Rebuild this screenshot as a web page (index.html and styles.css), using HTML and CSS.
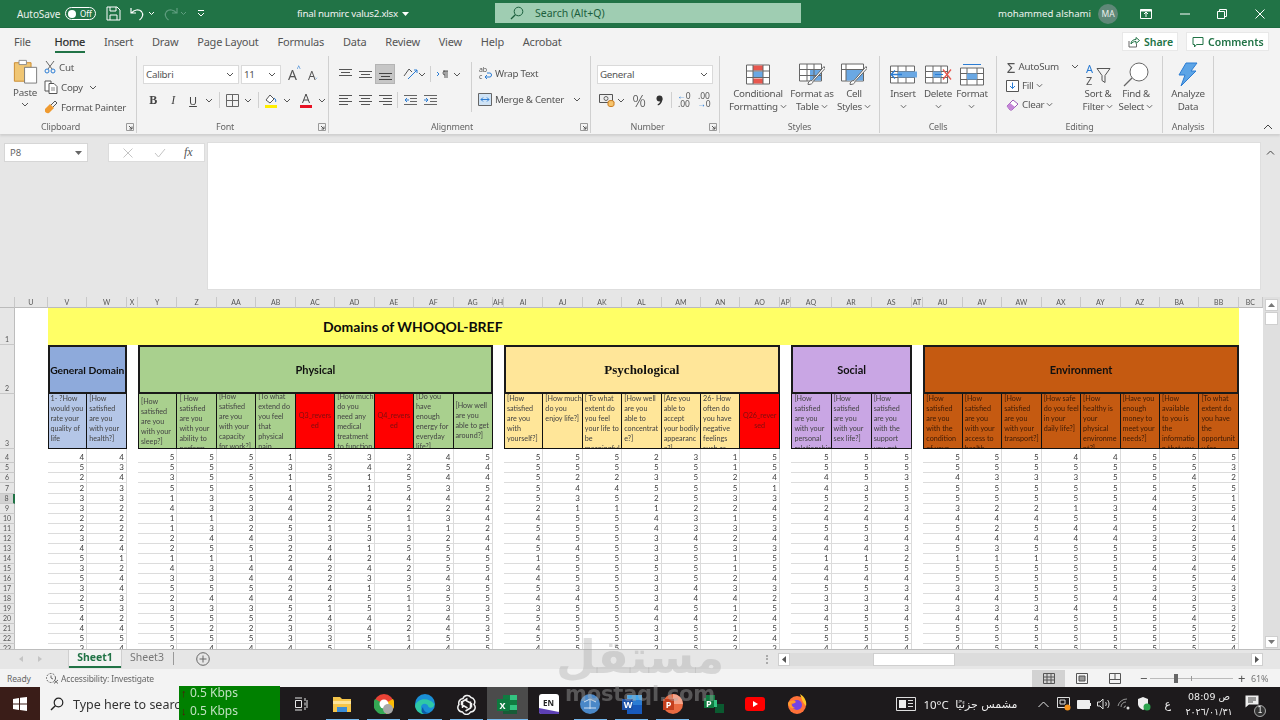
FILE: index.html
```html
<!DOCTYPE html>
<html lang="en">
<head>
<meta charset="utf-8">
<title>final numirc valus2.xlsx - Excel</title>
<link rel="stylesheet" href="styles.css">
</head>
<body>
<svg class="defs" width="0" height="0" aria-hidden="true">
  <symbol id="chev" viewBox="0 0 8 5"><path d="M1 1l3 3 3-3" fill="none" stroke="#555" stroke-width="1"/></symbol>
  <symbol id="launch" viewBox="0 0 8 8"><path d="M.5.5h7v7h-7z" fill="none" stroke="#999"/><path d="M3 3l3 3M6 3.5V6H3.5" fill="none" stroke="#555"/></symbol>
</svg>
<div class="app">
  <header class="titlebar">
    <div class="qat">
      <span class="autosave">AutoSave</span>
      <span class="toggle"><i class="knob"></i><b>Off</b></span>
      <svg class="save" width="15" height="15" viewBox="0 0 15 15"><path d="M1 1h10l3 3v10H1zM4 1v4h6V1M4 14V9h7v5" fill="none" stroke="#fff"/></svg>
      <svg class="undo" width="14" height="14" viewBox="0 0 14 14"><path d="M1 1v5h5M1.500 6C4 2.500 9 2 11.500 4.500c2 2.500 1.500 6-2 8.500" fill="none" stroke="#fff" stroke-width="1.200"/></svg>
      <svg class="mini" width="7" height="5"><path d="M1 1l2.500 2.500L6 1" fill="none" stroke="#fff"/></svg>
      <svg class="redo" width="14" height="14" viewBox="0 0 14 14"><path d="M13 1v5H8M12.500 6C10 2.500 5 2 2.500 4.500c-2 2.500-1.500 6 2 8.500" fill="none" stroke="#5f9d7f" stroke-width="1.200"/></svg>
      <svg class="mini" width="7" height="5"><path d="M1 1l2.500 2.500L6 1" fill="none" stroke="#5f9d7f"/></svg>
      <svg class="custom" width="8" height="7" viewBox="0 0 8 7"><path d="M1 .5h6M1 3l3 3 3-3" fill="none" stroke="#fff"/></svg>
    </div>
    <div class="docname">final numirc valus2.xlsx <svg width="7" height="4" viewBox="0 0 7 4"><path d="M0 0h7L3.500 4z" fill="#fff"/></svg></div>
    <div class="searchbox">
      <svg width="14" height="14" viewBox="0 0 14 14"><circle cx="8.500" cy="5.500" r="4.300" fill="none" stroke="#1c5f3d"/><path d="M5.300 8.700L1 13" stroke="#1c5f3d" stroke-width="1.300"/></svg>
      <span>Search (Alt+Q)</span>
    </div>
    <div class="user">mohammed alshami</div>
    <div class="avatar">MA</div>
    <div class="winctl">
      <svg width="12" height="10" viewBox="0 0 12 10"><path d="M.5.500h11v9H.5z" fill="none" stroke="#fff"/><path d="M6 8V3M4 5l2-2 2 2" fill="none" stroke="#fff"/><path d="M.5.500h11v2H.5z" fill="#fff"/></svg>
      <svg width="10" height="2" viewBox="0 0 10 2"><path d="M0 1h10" stroke="#fff"/></svg>
      <svg width="10" height="10" viewBox="0 0 10 10"><path d="M.5 2.500h7v7h-7zM2.500 2.500v-2h7v7h-2" fill="none" stroke="#fff"/></svg>
      <svg width="10" height="10" viewBox="0 0 10 10"><path d="M.5.500l9 9M9.500.5l-9 9" stroke="#fff"/></svg>
    </div>
  </header>

  <nav class="tabs">
    <span>File</span><span class="active">Home</span><span>Insert</span><span>Draw</span><span>Page Layout</span><span>Formulas</span><span>Data</span><span>Review</span><span>View</span><span>Help</span><span>Acrobat</span>
    <div class="tab-actions">
      <button class="action share"><svg width="12" height="12" viewBox="0 0 12 12"><path d="M1 5v6h7.500V8" fill="none" stroke="#666"/><path d="M3 8c0-3 2-4.500 5-4.500V1.500L11.500 4.500 8 7.500V5.500C6 5.500 4.500 6 3 8z" fill="none" stroke="#217346"/></svg>Share</button>
      <button class="action comments"><svg width="12" height="12" viewBox="0 0 12 12"><path d="M1 1.500h10v7H4.500L2.500 11V8.500H1z" fill="none" stroke="#217346"/></svg>Comments</button>
    </div>
  </nav>

  <section class="ribbon">
    <div class="group g-clip">
      <div class="body">
        <div class="big paste">
          <svg width="25" height="25" viewBox="0 0 26 27"><path d="M1 4h18v20H1z" fill="#f0c674" stroke="#c9882a"/><path d="M6 1.500h8V6H6z" fill="#fff" stroke="#8a8a8a"/><path d="M12 9h13v17H12z" fill="#fff" stroke="#777"/></svg>
          <span>Paste</span>
          <svg class="c" width="8" height="5"><use href="#chev"/></svg>
        </div>
        <div class="stack">
          <div class="item"><svg width="12" height="14" viewBox="0 0 12 14"><path d="M2 1l6 8M10 1L4 9" stroke="#666" fill="none"/><circle cx="3" cy="11" r="2" fill="none" stroke="#2b7cd3"/><circle cx="9" cy="11" r="2" fill="none" stroke="#2b7cd3"/></svg>Cut</div>
          <div class="item"><svg width="14" height="14" viewBox="0 0 14 14"><path d="M1 1h6v10H1z" fill="#fff" stroke="#555"/><path d="M5 3.500h5l3 3v7H5z" fill="#fff" stroke="#555"/><path d="M7 8h4M7 10h4" stroke="#888"/></svg>Copy<svg class="after near" width="8" height="5"><use href="#chev"/></svg></div>
          <div class="item"><svg width="14" height="14" viewBox="0 0 14 14"><path d="M1 9l5-5 4 4-5 5c-2 .5-3 0-4-1.500z" fill="#ef9a2f"/><path d="M7 5l4-4 2 2-4 4" fill="none" stroke="#555"/></svg>Format Painter</div>
        </div>
      </div>
      <div class="label">Clipboard</div>
      <svg class="launch" width="8" height="8"><use href="#launch"/></svg>
    </div>

    <div class="group g-font">
      <div class="rows">
        <div class="row">
          <div class="select w96"><span>Calibri</span><svg width="8" height="5"><use href="#chev"/></svg></div>
          <div class="select w40"><span>11</span><svg width="8" height="5"><use href="#chev"/></svg></div>
          <div class="fontsize"><span class="ga">A<sup>^</sup></span><span class="gb">A<sup>˅</sup></span></div>
        </div>
        <div class="row">
          <span class="tb bold">B</span><span class="tb ital">I</span><span class="tb und">U</span><span class="ch"><svg width="8" height="5"><use href="#chev"/></svg></span><span class="sp s3"></span>
          <span class="tb"><svg width="13" height="13" viewBox="0 0 13 13"><path d="M.5.500h12v12H.5zM6.500.500v12M.5 6.500h12" fill="none" stroke="#666"/></svg></span><span class="ch"><svg width="8" height="5"><use href="#chev"/></svg></span><span class="sp s3"></span>
          <span class="tb"><svg width="14" height="15" viewBox="0 0 14 15"><path d="M2 7l4-5 4 4-4 4z" fill="#fff" stroke="#555"/><path d="M10 5c2 1 2 3 1.500 4" stroke="#2b7cd3" fill="none"/><path d="M1 12h12v3H1z" fill="#ffee00"/></svg></span><span class="ch"><svg width="8" height="5"><use href="#chev"/></svg></span>
          <span class="tb m3"><svg width="14" height="15" viewBox="0 0 14 15"><path d="M3.500 10L7 1l3.500 9M5 7h4" fill="none" stroke="#444"/><path d="M1 12h12v3H1z" fill="#e81123"/></svg></span><span class="ch"><svg width="8" height="5"><use href="#chev"/></svg></span>
        </div>
      </div>
      <div class="label">Font</div>
      <svg class="launch" width="8" height="8"><use href="#launch"/></svg>
    </div>

    <div class="group g-align">
      <div class="body">
        <div class="rows leftcol">
          <div class="row">
            <span class="tb"><svg width="13" height="11" viewBox="0 0 13 11"><path d="M0 .5h13M2 3.500h9M0 6.500h13" stroke="#555"/></svg></span>
            <span class="tb"><svg width="13" height="11" viewBox="0 0 13 11"><path d="M0 2.500h13M2 5.500h9M0 8.500h13" stroke="#555"/></svg></span>
            <span class="tb on"><svg width="13" height="11" viewBox="0 0 13 11"><path d="M0 4.500h13M2 7.500h9M0 10.500h13" stroke="#444"/></svg></span>
            <span class="tb m5"><svg width="15" height="14" viewBox="0 0 15 14"><path d="M1 9l5-7 3 3" fill="none" stroke="#555"/><path d="M5 12L14 3M14 3h-3M14 3v3" fill="none" stroke="#2b7cd3"/></svg></span><span class="ch n4"><svg width="8" height="5"><use href="#chev"/></svg></span><span class="sp s2"></span>
            <span class="tb"><svg width="12" height="9" viewBox="0 0 12 9"><path d="M0 2l2 2-2 2" fill="none" stroke="#2b7cd3"/><path d="M6 1h5M8 1v7M10 1v7M8 1a2 2 0 0 0 0 4" fill="none" stroke="#555"/></svg></span><span class="ch n2"><svg width="8" height="5"><use href="#chev"/></svg></span>
          </div>
          <div class="row">
            <span class="tb"><svg width="13" height="12" viewBox="0 0 13 12"><path d="M0 1.500h13M0 4.500h9M0 7.500h13M0 10.500h9" stroke="#555"/></svg></span>
            <span class="tb"><svg width="13" height="12" viewBox="0 0 13 12"><path d="M0 1.500h13M2 4.500h9M0 7.500h13M2 10.500h9" stroke="#555"/></svg></span>
            <span class="tb"><svg width="13" height="12" viewBox="0 0 13 12"><path d="M0 1.500h13M4 4.500h9M0 7.500h13M4 10.500h9" stroke="#555"/></svg></span>
            <span class="sp s1"></span>
            <span class="tb"><svg width="13" height="12" viewBox="0 0 13 12"><path d="M0 1.500h13M6 4.500h7M6 7.500h7M0 10.500h13" stroke="#666"/><path d="M5 6H1M3 4L1 6l2 2" fill="none" stroke="#2b7cd3"/></svg></span>
            <span class="tb"><svg width="13" height="12" viewBox="0 0 13 12"><path d="M0 1.500h13M6 4.500h7M6 7.500h7M0 10.500h13" stroke="#666"/><path d="M0 6h4M2 4l2 2-2 2" fill="none" stroke="#2b7cd3"/></svg></span>
          </div>
        </div>
        <div class="rows rightcol">
          <div class="wide"><svg width="14" height="13" viewBox="0 0 14 13"><text class="svgt" x="1" y="5">ab</text><text class="svgt" x="1" y="12">c</text><path d="M9 6h3c2 0 2 4 0 4H7M9 8l-2 2 2 2" fill="none" stroke="#2b7cd3"/></svg>Wrap Text</div>
          <div class="wide"><svg width="14" height="13" viewBox="0 0 14 13"><path d="M.5.500h13v12H.5z" fill="#cfe3f6" stroke="#666"/><path d="M3 6.500h8M3 6.500l2-2M3 6.500l2 2M11 6.500l-2-2M11 6.500l-2 2" fill="none" stroke="#2b7cd3"/></svg>Merge &amp; Center<svg class="after" width="8" height="5"><use href="#chev"/></svg></div>
        </div>
      </div>
      <div class="label">Alignment</div>
      <svg class="launch" width="8" height="8"><use href="#launch"/></svg>
    </div>

    <div class="group g-num">
      <div class="rows">
        <div class="row"><div class="select w116"><span>General</span><svg width="8" height="5"><use href="#chev"/></svg></div></div>
        <div class="row">
          <span class="tb"><svg width="16" height="14" viewBox="0 0 16 14"><path d="M.5 1.500h13v8H.5z" fill="#eee" stroke="#555"/><circle cx="7" cy="5.500" r="2" fill="none" stroke="#666"/><ellipse cx="12" cy="9" rx="3" ry="1.500" fill="#f7c46c" stroke="#c87a1e"/><path d="M9 9v3c0 2 6 2 6 0V9" fill="#f7c46c" stroke="#c87a1e"/></svg></span><span class="ch n2"><svg width="8" height="5"><use href="#chev"/></svg></span>
          <span class="tb glyph pct">%</span>
          <span class="tb"><svg width="7" height="11" viewBox="0 0 7 11"><circle cx="3.500" cy="3.500" r="3" fill="#333"/><path d="M6.500 3.500c0 3-1.500 6-4.500 7l-.5-1c2-1 3-3 3-5z" fill="#333"/></svg></span>
          <span class="sp s1"></span>
          <span class="tb dec"><small><i>←</i>0</small><small>.00</small></span>
          <span class="tb dec"><small>.00</small><small><i>→</i>0</small></span>
        </div>
      </div>
      <div class="label">Number</div>
      <svg class="launch" width="8" height="8"><use href="#launch"/></svg>
    </div>

    <div class="group g-styles">
      <div class="body">
        <div class="big w68">
          <svg width="24" height="20" viewBox="0 0 24 20"><path d="M.5.500h23v19H.5z" fill="#fff" stroke="#666"/><path d="M7 1h10v5H7zM7 14h10v5H7z" fill="#e8574e"/><path d="M7 7h10v6H7z" fill="#6aa8e4"/><path d="M.5 6.500h23M.5 13h23M7 .5v19M17 .5v19" stroke="#666" fill="none"/></svg>
          <span>Conditional<br>Formatting <svg width="7" height="5"><use href="#chev"/></svg></span>
        </div>
        <div class="big w40">
          <svg width="26" height="22" viewBox="0 0 26 22"><path d="M.5.500h22v17H.5z" fill="#fff" stroke="#666"/><path d="M11 6h11v11H11z" fill="#6aa8e4"/><path d="M.5 6h22M.5 12h22M8 .5v17M15 .5v17" stroke="#666" fill="none"/><path d="M25 3L13 17c-3 0-4 2-4 4 3 0 5-1 5-3L26 5z" fill="#fff" stroke="#666"/></svg>
          <span>Format as<br>Table <svg width="7" height="5"><use href="#chev"/></svg></span>
        </div>
        <div class="big w44">
          <svg width="26" height="22" viewBox="0 0 26 22"><path d="M.5.500h22v17H.5z" fill="#fff" stroke="#666"/><path d="M5 6h17v11H5z" fill="#6aa8e4"/><path d="M.5 6h22M5 .5v17" stroke="#666" fill="none"/><path d="M25 3L13 17c-3 0-4 2-4 4 3 0 5-1 5-3L26 5z" fill="#fff" stroke="#666"/></svg>
          <span>Cell<br>Styles <svg width="7" height="5"><use href="#chev"/></svg></span>
        </div>
      </div>
      <div class="label">Styles</div>
    </div>

    <div class="group g-cells">
      <div class="body">
        <div class="big w36">
          <svg width="27" height="20" viewBox="0 0 27 20"><path d="M.5 1.500h24v17H.5z" fill="#fff" stroke="#666"/><path d="M.5 7h24M.5 13h24M8 1.500v17M16 1.500v17" stroke="#666"/><path d="M8 7h19v6H8z" fill="#6aa8e4"/><path d="M12 10H1M5 6l-4 4 4 4" fill="none" stroke="#2b7cd3" stroke-width="1.300"/></svg>
          <span>Insert<br><svg width="7" height="5"><use href="#chev"/></svg></span>
        </div>
        <div class="big w34">
          <svg width="27" height="20" viewBox="0 0 27 20"><path d="M.5 1.500h22v17H.5z" fill="#fff" stroke="#666"/><path d="M.5 7h22M.5 13h22M8 1.500v17M16 1.500v17" stroke="#666"/><path d="M8 7h8v6H8z" fill="#6aa8e4"/><path d="M10 10h8" stroke="#2b7cd3"/><path d="M18 5l8 10M26 5l-8 10" stroke="#e8574e" stroke-width="1.300"/></svg>
          <span>Delete<br><svg width="7" height="5"><use href="#chev"/></svg></span>
        </div>
        <div class="big w34">
          <svg width="24" height="22" viewBox="0 0 24 22"><path d="M3 1h18" stroke="#2b7cd3"/><path d="M.5 4.500h23v17H.5z" fill="#fff" stroke="#666"/><path d="M.5 10h23M.5 16h23M7 4.500v17M17 4.500v17" stroke="#666"/><path d="M7 10h10v6H7z" fill="#6aa8e4"/></svg>
          <span>Format<br><svg width="7" height="5"><use href="#chev"/></svg></span>
        </div>
      </div>
      <div class="label">Cells</div>
    </div>

    <div class="group g-edit">
      <div class="body">
        <div class="stack estack">
          <div class="item"><span class="sigma">Σ</span>AutoSum<svg class="after far" width="8" height="5"><use href="#chev"/></svg></div>
          <div class="item"><svg width="13" height="12" viewBox="0 0 13 12"><path d="M.5.500h12v11H.5z" fill="#fff" stroke="#555"/><path d="M6.500 2.500v6M4 6l2.500 2.500L9 6" fill="none" stroke="#2b7cd3"/></svg>Fill<svg class="after" width="7" height="5"><use href="#chev"/></svg></div>
          <div class="item"><svg width="13" height="12" viewBox="0 0 13 12"><path d="M1 7l6-6 5 4-6 6H4z" fill="#fff" stroke="#9b59b6"/><path d="M1 7l3-3 5 4-3 3H4z" fill="#c586d8"/></svg>Clear<svg class="after" width="7" height="5"><use href="#chev"/></svg></div>
        </div>
        <div class="big w38">
          <svg width="25" height="22" viewBox="0 0 25 22"><text class="svga blue" x="0" y="9">A</text><text class="svga" x="0" y="21">Z</text><path d="M11 5h13l-5 7v7l-3-2v-5z" fill="none" stroke="#555"/></svg>
          <span>Sort &amp;<br>Filter <svg width="7" height="5"><use href="#chev"/></svg></span>
        </div>
        <div class="big w38">
          <svg width="26" height="25" viewBox="0 0 26 25"><circle cx="16" cy="10" r="9" fill="#fff" stroke="#666"/><path d="M9 16L1 24" stroke="#666" stroke-width="1.300"/></svg>
          <span>Find &amp;<br>Select <svg width="7" height="5"><use href="#chev"/></svg></span>
        </div>
      </div>
      <div class="label">Editing</div>
    </div>

    <div class="group g-an">
      <div class="body">
        <div class="big full">
          <svg width="20" height="25" viewBox="0 0 20 25"><path d="M8 1h11l-6 8h5L3 24l4-11H1z" fill="#5ca4e6" stroke="#2b7cd3"/></svg>
          <span>Analyze<br>Data</span>
        </div>
      </div>
      <div class="label">Analysis</div>
    </div>
    <div class="collapse"><svg width="10" height="6" viewBox="0 0 10 6"><path d="M1 5l4-4 4 4" fill="none" stroke="#444"/></svg></div>
  </section>

  <section class="formula">
    <div class="namebox"><span>P8</span><svg width="7" height="4" viewBox="0 0 7 4"><path d="M0 0h7L3.500 4z" fill="#666"/></svg></div>
    <div class="dots3"></div>
    <div class="fxbox">
      <svg width="10" height="10" viewBox="0 0 10 10"><path d="M.5.500l9 9M9.500.5l-9 9" stroke="#c4c4c4"/></svg>
      <svg width="12" height="10" viewBox="0 0 12 10"><path d="M1 5l3.500 4L11 1" fill="none" stroke="#c4c4c4"/></svg>
      <span class="fx">fx</span>
    </div>
    <div class="fbar"></div>
    <svg class="fcollapse" width="9" height="5" viewBox="0 0 9 5"><path d="M1 4.500L4.500 1 8 4.500" fill="none" stroke="#444"/></svg>
  </section>

  <section class="workarea">
    <div class="grid" id="grid">
      <div class="corner"></div>
      <div class="ch-h">U</div><div class="ch-h">V</div><div class="ch-h">W</div><div class="ch-h">X</div><div class="ch-h">Y</div><div class="ch-h">Z</div><div class="ch-h">AA</div><div class="ch-h">AB</div><div class="ch-h">AC</div><div class="ch-h">AD</div><div class="ch-h">AE</div><div class="ch-h">AF</div><div class="ch-h">AG</div><div class="ch-h">AH</div><div class="ch-h">AI</div><div class="ch-h">AJ</div><div class="ch-h">AK</div><div class="ch-h">AL</div><div class="ch-h">AM</div><div class="ch-h">AN</div><div class="ch-h">AO</div><div class="ch-h">AP</div><div class="ch-h">AQ</div><div class="ch-h">AR</div><div class="ch-h">AS</div><div class="ch-h">AT</div><div class="ch-h">AU</div><div class="ch-h">AV</div><div class="ch-h">AW</div><div class="ch-h">AX</div><div class="ch-h">AY</div><div class="ch-h">AZ</div><div class="ch-h">BA</div><div class="ch-h">BB</div><div class="ch-h">BC</div>

      <div class="rh"><span>1</span></div><div></div>
      <div class="title"><span>Domains of WHOQOL-BREF</span></div><div></div>

      <div class="rh"><span>2</span></div><div></div>
      <div class="band blue span2">General Domain</div><div></div>
      <div class="band green span9">Physical</div><div></div>
      <div class="band cream span7 serif">Psychological</div><div></div>
      <div class="band purple span3">Social</div><div></div>
      <div class="band orange span8">Environment</div><div></div>

      <div class="rh"><span>3</span></div><div></div>
      <div class="q lblue first"><p>1- ?How<br>would you<br>rate your<br>quality of<br>life</p></div>
      <div class="q lblue"><p>[How<br>satisfied<br>are you<br>with your<br>health?]</p></div><div></div>
      <div class="q lgreen first low"><p>[How<br>satisfied<br>are you<br>with your<br>sleep?]</p></div>
      <div class="q lgreen"><p>[ How<br>satisfied<br>are you<br>with your<br>ability to<br>perform</p></div>
      <div class="q lgreen up"><p>[How<br>satisfied<br>are you<br>with your<br>capacity<br>for work?]</p></div>
      <div class="q lgreen up"><p>[To what<br>extend do<br>you feel<br>that<br>physical<br>pain</p></div>
      <div class="q red mid"><p>Q3_revers<br>ed</p></div>
      <div class="q lgreen up"><p>[How much<br>do you<br>need any<br>medical<br>treatment<br>to function</p></div>
      <div class="q red mid"><p>Q4_revers<br>ed</p></div>
      <div class="q lgreen up"><p>[Do you<br>have<br>enough<br>energy for<br>everyday<br>life?]</p></div>
      <div class="q lgreen mid"><p>[How well<br>are you<br>able to get<br>around?]</p></div><div></div>
      <div class="q lcream first"><p>[How<br>satisfied<br>are you<br>with<br>yourself?]</p></div>
      <div class="q lcream"><p>[How much<br>do you<br>enjoy life?]</p></div>
      <div class="q lcream"><p>[ To what<br>extent do<br>you feel<br>your life to<br>be<br>meaningful</p></div>
      <div class="q lcream"><p>[How well<br>are you<br>able to<br>concentrat<br>e?]</p></div>
      <div class="q lcream"><p>[Are you<br>able to<br>accept<br>your bodily<br>appearanc<br>e?]</p></div>
      <div class="q lcream"><p>26- How<br>often do<br>you have<br>negative<br>feelings<br>such as</p></div>
      <div class="q red mid"><p>Q26_rever<br>sed</p></div><div></div>
      <div class="q lpurple first"><p>[How<br>satisfied<br>are you<br>with your<br>personal<br>relationship</p></div>
      <div class="q lpurple"><p>[How<br>satisfied<br>are you<br>with your<br>sex life?]</p></div>
      <div class="q lpurple"><p>[How<br>satisfied<br>are you<br>with the<br>support<br>you get</p></div><div></div>
      <div class="q dorange first"><p>[How<br>satisfied<br>are you<br>with the<br>condition<br>of your</p></div>
      <div class="q dorange"><p>[How<br>satisfied<br>are you<br>with your<br>access to<br>health</p></div>
      <div class="q dorange"><p>[How<br>satisfied<br>are you<br>with your<br>transport?]</p></div>
      <div class="q dorange"><p>[How safe<br>do you feel<br>in your<br>daily life?]</p></div>
      <div class="q dorange"><p>[How<br>healthy is<br>your<br>physical<br>environme<br>nt?]</p></div>
      <div class="q dorange"><p>[Have you<br>enough<br>money to<br>meet your<br>needs?]</p></div>
      <div class="q dorange"><p>[How<br>available<br>to you is<br>the<br>informatio<br>n that you</p></div>
      <div class="q dorange"><p>[To what<br>extent do<br>you have<br>the<br>opportunit<br>y for</p></div><div></div>
    </div>
    <aside class="vscroll">
      <span class="sbtn"><svg width="7" height="4" viewBox="0 0 7 4"><path d="M3.500 0L7 4H0z" fill="#777"/></svg></span>
      <span class="sthumb"></span>
      <span class="sbtn bottom"><svg width="7" height="4" viewBox="0 0 7 4"><path d="M0 0h7L3.500 4z" fill="#777"/></svg></span>
    </aside>
  </section>

  <section class="sheetbar">
    <div class="nav"><svg width="4" height="6" viewBox="0 0 4 6"><path d="M4 0v6L0 3z" fill="#c4c4c4"/></svg><svg width="4" height="6" viewBox="0 0 4 6"><path d="M0 0v6l4-3z" fill="#c4c4c4"/></svg></div>
    <div class="sheettab on">Sheet1</div>
    <div class="sheettab">Sheet3</div>
    <div class="tabsep"></div>
    <svg class="addsheet" width="14" height="14" viewBox="0 0 14 14"><circle cx="7" cy="7" r="6.300" fill="none" stroke="#666"/><path d="M7 3.500v7M3.500 7h7" stroke="#666"/></svg>
    <div class="grip"></div>
    <div class="hscroll">
      <span class="hbtn"><svg width="4" height="7" viewBox="0 0 4 7"><path d="M4 0v7L0 3.500z" fill="#555"/></svg></span>
      <div class="htrack"><span class="hthumb"></span></div>
      <span class="hbtn"><svg width="4" height="7" viewBox="0 0 4 7"><path d="M0 0v7l4-3.500z" fill="#555"/></svg></span>
    </div>
  </section>

  <footer class="status">
    <span class="ready">Ready</span>
    <svg width="14" height="12" viewBox="0 0 14 12"><circle cx="6" cy="6" r="4.500" fill="none" stroke="#666" stroke-dasharray="2 1.200"/><path d="M6 3.500V6l2 1" fill="none" stroke="#666"/><path d="M9 8l4 3.500M13 8l-4 3.500" stroke="#666"/></svg>
    <span class="acc">Accessibility: Investigate</span>
    <div class="views">
      <span class="view on"><svg width="12" height="11" viewBox="0 0 12 11"><path d="M.5.500h11v10H.5zM4 .5v10M8 .5v10M.5 4h11M.5 7h11" fill="none" stroke="#555"/></svg></span>
      <span class="view"><svg width="12" height="11" viewBox="0 0 12 11"><path d="M.5.500h11v10H.5z" fill="none" stroke="#555"/><path d="M3 3h6v5H3z" fill="#999" stroke="#555"/></svg></span>
      <span class="view"><svg width="12" height="11" viewBox="0 0 12 11"><path d="M.5.500h11v10H.5zM6 .5v6M.5 6.500h11" fill="none" stroke="#555"/></svg></span>
    </div>
    <div class="zoomer">
      <span class="zm">−</span>
      <div class="ztrack"><i class="zthumb"></i><i class="ztick"></i></div>
      <span class="zm">+</span>
      <span class="zpct">61%</span>
    </div>
  </footer>

  <footer class="taskbar">
    <div class="start"><svg width="14" height="14" viewBox="0 0 14 14"><path d="M0 2l6-1v5.500H0zM7 .8L14 0v6.500H7zM0 7.500h6V13l-6-1zM7 7.500h7V14l-7-1z" fill="#fff"/></svg></div>
    <div class="tsearch">
      <svg width="14" height="14" viewBox="0 0 14 14"><circle cx="8.500" cy="5.500" r="4.300" fill="none" stroke="#222" stroke-width="1.200"/><path d="M5.300 8.700L1 13" stroke="#222" stroke-width="1.400"/></svg>
      <span>Type here to search</span>
    </div>
    <div class="netbox"><div><i>↑</i>0.5 Kbps</div><div><i>↓</i>0.5 Kbps</div></div>
    <div class="apps">
      <span class="ti"><svg width="14" height="14" viewBox="0 0 14 14"><path d="M1 1h7M1 13h7M1.500 3.500h6v7h-6zM11 1v3M11 5.500v3M11 10v3M13 3v8" fill="none" stroke="#e6e6e6"/></svg></span>
      <span class="ti run"><svg width="20" height="17" viewBox="0 0 20 17"><path d="M1 1h7l2 2h9v13H1z" fill="#f5c54a"/><path d="M1 5h18v3H1z" fill="#fbe39a"/><path d="M5 11h10v5H5z" fill="#3a8dd8"/></svg></span>
      <span class="ti run"><svg width="20" height="20" viewBox="0 0 20 20"><circle cx="10" cy="10" r="10" fill="#e94235"/><path d="M10 10L19 5a10 10 0 0 1-7 15z" fill="#fbbc05"/><path d="M10 10l2 10A10 10 0 0 1 1 5z" fill="#34a853"/><circle cx="10" cy="10" r="4.500" fill="#fff"/><circle cx="14" cy="15" r="5" fill="#a8a8a8"/></svg></span>
      <span class="ti run"><svg width="20" height="20" viewBox="0 0 20 20"><circle cx="10" cy="10" r="10" fill="#1a8fd6"/><path d="M0 12c2-8 14-9 19-2 1 4-5 5-6 2 0-2-6-4-7 1 0 3 3 6 6 7-6 1-11-2-12-8z" fill="#2fc9a6"/><path d="M8 13c0 3 3 6 6 6a10 10 0 0 1-4 1c-3 0-5-3-2-7z" fill="#0b5aa6"/></svg></span>
      <span class="ti run"><svg width="21" height="21" viewBox="0 0 21 21"><g fill="none" stroke="#f1f1f1" stroke-width="1.500"><path d="M7 4.500a4.500 4.500 0 0 1 8-1 4.500 4.500 0 0 1 3 7 4.500 4.500 0 0 1-3.500 7.500 4.500 4.500 0 0 1-8 0A4.500 4.500 0 0 1 3 10.500a4.500 4.500 0 0 1 4-6z"/><path d="M6.500 14V7.500l5-3M10 6.500l5.500 3.200v3.800M14.500 7.500v6.500l-5 3M11.500 14L5.500 10.500V7"/></g></svg></span>
      <span class="ti run sel"><svg width="21" height="19" viewBox="0 0 21 19"><path d="M6 0h14v19H6z" fill="#107c41"/><path d="M13 0h7v5h-7zM13 10h7v5h-7z" fill="#33c481"/><path d="M6 15h14v4H6z" fill="#185c37"/><path d="M0 4h12v12H0z" fill="#0e7a3f"/><text class="svgx" x="2.500" y="14">X</text></svg></span>
      <span class="ti"><svg width="20" height="20" viewBox="0 0 20 20"><rect width="20" height="20" rx="3" fill="#fff"/><path d="M0 14l20 4v-2a2 2 0 0 1-2 4H2a2 2 0 0 1-2-2z" fill="#5c3fb4"/><text class="svgen" x="4" y="12">EN</text></svg></span>
      <span class="ti run"><svg width="20" height="20" viewBox="0 0 20 20"><circle cx="10" cy="10" r="10" fill="#4a88c8"/><path d="M4 8l6-3 6 3M10 5v10M4 14h12" stroke="#cfe0f2" fill="none"/></svg></span>
      <span class="ti run"><svg width="20" height="19" viewBox="0 0 20 19"><path d="M5 0h15v19H5z" fill="#185abd"/><path d="M5 0h15v5H5z" fill="#41a5ee"/><path d="M5 5h15v5H5z" fill="#2b7cd3"/><path d="M0 4h11v11H0z" fill="#1d52a8"/><text class="svgx" x="1.700" y="13.400">W</text></svg></span>
      <span class="ti run"><svg width="20" height="20" viewBox="0 0 20 20"><circle cx="10" cy="10" r="10" fill="#ea6b42"/><path d="M10 0a10 10 0 0 1 10 10H10z" fill="#f4a58c"/><path d="M0 5h11v11H0z" fill="#c43e1c"/><text class="svgx" x="2.700" y="14">P</text></svg></span>
      <span class="ti"><svg width="20" height="19" viewBox="0 0 20 19"><path d="M2 0h9v9H2z" fill="#107c41"/><path d="M11 9h9v9h-9z" fill="#0b5a30"/><path d="M7 5h6v7H7z" fill="#33c481"/><path d="M0 3h10v10H0z" fill="#0e7a3f"/><text class="svgx" x="2" y="12">P</text></svg></span>
      <span class="ti"><svg width="20" height="14" viewBox="0 0 20 14"><rect width="20" height="14" rx="3" fill="#f00"/><path d="M8 4l5 3-5 3z" fill="#fff"/></svg></span>
      <span class="ti"><svg width="20" height="20" viewBox="0 0 20 20"><circle cx="10" cy="11" r="9" fill="#ff7139"/><path d="M13 0c5 3 7 8 6 12-3-3-4-6-6-12z" fill="#ffc227"/><circle cx="10" cy="11" r="5" fill="#7542e5"/><path d="M1 9c3-3 6-3 8-1-2 2-4 2-5 1 0 3 2 4 4 5-3 1-7-1-7-5z" fill="#ff9b2e"/></svg></span>
    </div>
    <div class="tray">
      <svg width="20" height="14" viewBox="0 0 20 14"><path d="M.5.500h19v13H.5z" fill="none" stroke="#ddd"/><path d="M3 3h7v8H3z" fill="#eee"/><path d="M12 3.500h5M12 6.500h5M12 9.500h5" stroke="#ddd"/></svg>
      <span class="temp">10°C</span>
      <span class="wx" dir="rtl">مشمس جزئيًا</span>
      <svg class="traych" width="11" height="7" viewBox="0 0 11 7"><path d="M.5 6l5-5 5 5" fill="none" stroke="#e6e6e6"/></svg>
      <svg class="trayi first" width="14" height="14" viewBox="0 0 14 14"><path d="M.5.500h12v10H.5z" fill="none" stroke="#ddd"/><path d="M3 3h5v4H3z" fill="none" stroke="#ddd"/><circle cx="10.500" cy="10.500" r="3" fill="#f7941d"/></svg>
      <svg class="trayi" width="14" height="9" viewBox="0 0 14 9"><path d="M.5.500h12v8H.5z" fill="#eee" stroke="#eee"/><path d="M13 3h1v3h-1z" fill="#eee"/></svg>
      <svg class="trayi" width="14" height="12" viewBox="0 0 14 12"><path d="M.5 4h2.500L6 1v10L3 8H.5zM8.500 4c1 1 1 3 0 4M10.500 2c2 2 2 6 0 8" fill="none" stroke="#ddd"/></svg>
      <svg class="trayi" width="14" height="12" viewBox="0 0 14 12"><path d="M1 8a9 9 0 0 1 9-7M4 9a5 5 0 0 1 5-5M7 10a2 2 0 0 1 2-2" fill="none" stroke="#999"/><circle cx="11" cy="10" r="1.500" fill="#ddd"/></svg>
      <svg class="trayi" width="14" height="14" viewBox="0 0 14 14"><path d="M1 2l5-2 5 2v5c0 3-3 5-5 6-2-1-5-3-5-6z" fill="#eee"/><circle cx="10" cy="10" r="3.500" fill="#2da44e"/></svg>
      <span class="lang">ع</span>
      <div class="clock"><div dir="rtl">ص 08:09</div><div>٢٠٢٦/٠١/٣١</div></div>
      <div class="notif"><svg width="14" height="13" viewBox="0 0 14 13"><path d="M.5.500h13v9H4l-3.500 3z" fill="#eee"/><path d="M3 3h8M3 5h8M3 7h5" stroke="#444"/></svg><b>1</b></div>
    </div>
  </footer>
  <div class="watermark" aria-hidden="true"><span class="wm-ar">مستقل</span><span class="wm-en">mostaql.com</span></div>
</div>
<script src="app.js"></script>
</body>
</html>
```
FILE: styles.css
```css
* { box-sizing: border-box; }
html, body { margin: 0; padding: 0; height: 100%; overflow: hidden; }
body { font-family: "Noto Sans", "Open Sans", sans-serif; color: #444; background: #e6e6e6; }
.defs { position: absolute; }
svg { display: block; flex: none; }
.app { position: relative; width: 1280px; height: 720px; display: flex; flex-direction: column; overflow: hidden; filter: blur(.3px); }

/* title bar */
.titlebar { height: 28px; background: #217346; color: #fff; display: flex; align-items: center; font-size: 10px; flex: none; border-bottom: 1px solid #1e6b41; }
.qat { display: flex; align-items: center; width: 297px; padding-left: 17px; }
.autosave { width: 48px; color: #e9f1ec; letter-spacing: -.1px; }
.toggle { width: 31px; height: 13px; border: 1px solid #fff; border-radius: 7px; display: flex; align-items: center; padding-left: 2px; gap: 4px; }
.toggle .knob { width: 8px; height: 8px; border-radius: 50%; background: #fff; }
.toggle b { font-weight: 400; font-size: 8px; }
.save { margin-left: 10px; }
.undo { margin-left: 9px; }
.qat .mini { margin-left: 4px; }
.redo { margin-left: 9px; }
.qat .mini + .redo + .mini { margin-left: 2px; }
.custom { margin-left: 10px; }
.docname { width: 198px; display: flex; align-items: center; gap: 4px; color: #f2f2f2; font-size: 9.800px; letter-spacing: -.25px; }
.searchbox { width: 306px; height: 20px; margin-top: -1px; background: #9fcdb2; display: flex; align-items: center; padding-left: 15px; gap: 11px; color: #1c5f3d; font-size: 10.500px; }
.user { margin-left: 197px; width: 100px; font-size: 9.600px; white-space: nowrap; color: #eef3f0; }
.avatar { width: 20px; height: 20px; margin-left: 0; border-radius: 50%; background: #5f8878; color: #e8eeeb; font-size: 8.500px; display: flex; align-items: center; justify-content: center; }
.winctl { display: flex; align-items: center; margin-left: 22px; gap: 27.500px; }

/* tabs */
.tabs { height: 27px; background: #f3f3f3; display: flex; align-items: flex-start; gap: 18.800px; padding-left: 14px; font-size: 11px; letter-spacing: -.2px; color: #555; flex: none; }
.tabs > span { height: 21.500px; padding-top: 2.500px; margin-top: 3px; }
.tabs .active { margin-left: 5px; color: #2b2b2b; -webkit-text-stroke: .2px #2b2b2b; border-bottom: 2px solid #217346; }
.tab-actions { margin-left: auto; display: flex; gap: 8px; padding-right: 11px; margin-top: 4px; }
.action { border: 1px solid #e8e8e8; background: #fff; height: 19px; display: flex; align-items: center; gap: 4px; color: #217346; font: 600 10.500px "Noto Sans", sans-serif; padding: 0 5px; white-space: nowrap; }
.share { width: 56px; }
.comments { width: 83px; }

/* ribbon */
.ribbon { height: 79px; background: #f3f3f3; display: flex; flex: none; font-size: 9.800px; letter-spacing: -.28px; color: #555; box-shadow: 0 2px 2px #cfcfcf; position: relative; z-index: 2; }
.group { position: relative; display: flex; flex-direction: column; height: 77px; margin-top: 1px; border-right: 1px solid #d0d0d0; flex: none; }
.body { flex: 1; display: flex; min-height: 0; }
.rows { flex: 1; display: flex; flex-direction: column; gap: 6px; padding-top: 8px; }
.row { height: 20px; display: flex; align-items: center; }
.label { height: 14px; line-height: 15px; text-align: center; font-size: 9px; letter-spacing: -.2px; color: #666; }
.launch { position: absolute; right: 2px; bottom: 2px; }
.g-clip { width: 137px; }
.g-font { width: 192px; padding-left: 6px; }
.g-align { width: 262px; padding-left: 6px; }
.g-num { width: 129px; padding-left: 6px; }
.g-styles { width: 160px; padding-left: 4px; }
.g-cells { width: 117px; padding-left: 5px; }
.g-edit { width: 166px; padding-left: 9px; }
.g-an { width: 51px; }
.g-font .label, .g-align .label, .g-num .label { margin-left: -6px; padding-right: 15px; }
.g-clip .label { padding-right: 15px; }
.g-styles .label { margin-left: -4px; }
.g-cells .label { margin-left: -5px; }
.g-edit .label { margin-left: -9px; }

.big { display: flex; flex-direction: column; align-items: center; text-align: center; padding-top: 6px; line-height: 13px; flex: none; }
.big > svg { height: 25px; }
.big > span { white-space: nowrap; }
.big > span svg { display: inline-block; vertical-align: 1px; }
.paste { width: 34px; margin-left: 8px; padding-top: 3px; }
.paste > span { margin-top: 2px; }
.paste .c { height: 5px; margin-top: 3px; }
.w68 { width: 68px; } .w40 { width: 40px; } .w44 { width: 44px; } .w36 { width: 36px; } .w34 { width: 34px; } .w38 { width: 38px; }
.full { width: 100%; }

.stack { display: flex; flex-direction: column; padding: 1px 0 0 2px; }
.item { height: 20px; display: flex; align-items: center; gap: 3px; white-space: nowrap; }
.after { margin-left: 6px; }
.after.near { margin-left: 3px; }
.estack { width: 73px; padding-left: 0; padding-top: 1px; }
.estack .item { height: 19px; }
.estack .item svg.after { margin-left: -1px; }
.estack .item svg.after.far { margin-left: 9px; }
.sigma { font-size: 15px; width: 16px; text-align: center; }

.select { height: 19px; background: #fff; border: 1px solid #dadada; display: flex; align-items: center; justify-content: space-between; padding: 0 4px 0 2px; flex: none; }
.w96 { width: 96px; } .w116 { width: 116px; }
.select.w40 { margin-left: 2px; }
.fontsize { display: flex; margin-left: 7px; gap: 5px; font-size: 14px; }
.ga, .gb { width: 15px; display: flex; color: #555; }
.gb { font-size: 12px; align-items: flex-end; }
.fontsize sup { font-size: 7px; color: #2b7cd3; line-height: 1; }
.tb { width: 20px; height: 20px; display: flex; align-items: center; justify-content: center; flex: none; font-size: 11px; color: #444; }
.ch { width: 12px; display: flex; justify-content: center; flex: none; }
.sp { width: 1px; height: 16px; background: #d0d0d0; flex: none; }
.s1 { margin: 0 2px; } .s2 { margin: 0 2px 0 2px; } .s3 { margin: 0 2px 0 4px; }
.n2 { margin-left: -2px; } .n4 { margin-left: -4px; }
.m3 { margin-left: 3px; } .m5 { margin-left: 5px; }
.bold { font-weight: 700; font-family: "Liberation Serif", serif; font-size: 12px; }
.ital { font-style: italic; font-family: "Liberation Serif", serif; font-size: 12px; }
.und { text-decoration: underline; }
.on { background: #c6c6c6; }
.view.on { background: #d2d2d2; }
.leftcol { flex: none; width: 136px; }
.leftcol .row .tb.on { border: 1px solid #b4b4b4; }
.rightcol { flex: none; padding: 1px 0 0 6px; border-left: 1px solid #d0d0d0; height: 50px; margin-top: 6px; }
.wide { height: 20px; display: flex; align-items: center; gap: 3px; white-space: nowrap; }
.glyph.pct { font-size: 17px; color: #555; font-weight: 300; margin-left: 2px; }
.dec { flex-direction: column; line-height: 8px; letter-spacing: 0; }
.dec small { font-size: 8.500px; display: flex; color: #555; }
.dec i { color: #2b7cd3; font-style: normal; }
.svgt { font: 7px "Noto Sans", sans-serif; fill: #555; }
.svga { font: 11px "Noto Sans", sans-serif; fill: #555; }
.svga.blue { fill: #2b7cd3; }
.collapse { flex: 1; display: flex; justify-content: flex-end; align-items: flex-end; padding: 0 7px 4px 0; }

/* formula */
.formula { position: relative; height: 163px; background: #e6e6e6; display: flex; padding: 8px 0 7px 4px; flex: none; }
.namebox { width: 84px; height: 19px; margin-top: 1px; background: #fff; border: 1px solid #d6d6d6; display: flex; align-items: center; justify-content: space-between; padding: 0 5px; font-size: 9.500px; color: #666; }
.dots3 { width: 20px; }
.fxbox { width: 97px; height: 19px; margin-top: 1px; background: #fff; border: 1px solid #dcdcdc; display: flex; align-items: center; padding-left: 14px; gap: 21px; }
.fx { font: italic 12px "Liberation Serif", serif; color: #555; margin-left: -3px; }
.fbar { width: 1054px; margin-left: 2px; background: #fff; border: 1px solid #dedede; }
.fcollapse { margin: 8px 0 0 5px; }

/* sheet */
.workarea { height: 353px; display: flex; background: #fff; flex: none; border-bottom: 1px solid #bdbdbd; overflow: hidden; }
.grid { width: 1263px; height: 353px; overflow: hidden; display: grid; flex: none;
  grid-template-columns: 15px 32.5px repeat(2, 39.75px) 11px repeat(9, 39.44px) 11px repeat(7, 39.43px) 11.5px repeat(3, 40.13px) 11.6px repeat(8, 39.44px) 24px;
  grid-template-rows: 11px 37px 49px 55px 13.700px 10px 10.600px 10.700px 10.300px;
  grid-auto-rows: 10px;
  font-family: Lato, "Liberation Sans", sans-serif; font-size: 8px; color: #3a3a3a; background: #fff; }
.corner { background: #e6e6e6; border-right: 1px solid #c8c8c8; border-bottom: 1px solid #bbb; }
.ch-h { background: #e6e6e6; border-right: 1px solid #c8c8c8; border-bottom: 1px solid #bbb; text-align: center; font-size: 7px; line-height: 10px; color: #555; overflow: hidden; }
.rh { background: #e6e6e6; border-right: 1px solid #bdbdbd; border-bottom: 1px solid #c8c8c8; display: flex; align-items: flex-end; justify-content: center; font-size: 7px; line-height: 9px; color: #555; overflow: hidden; }
.rh.sel { background: #d2d2d2; border-right: 2px solid #217346; }
.title { grid-column: 3 / 36; background: #ffff66; color: #0b0b0b; font-weight: 700; font-size: 14px; display: flex; align-items: center; padding-left: 275.500px; }
.band { border: 2px solid #1a1a1a; display: flex; align-items: center; justify-content: center; color: #101010; font-size: 11px; font-weight: 700; white-space: nowrap; }
.span2 { grid-column: span 2; } .span9 { grid-column: span 9; } .span7 { grid-column: span 7; } .span3 { grid-column: span 3; } .span8 { grid-column: span 8; }
.band.blue { background: #8eaadb; font-size: 10.300px; }
.band.green { background: #a9d08e; }
.band.cream { background: #ffe699; }
.band.purple { background: #c9a6e4; }
.band.orange { background: #c55a11; }
.band.serif { font-family: "Liberation Serif", serif; font-size: 13px; }
.q { border-right: 1px solid #111; border-bottom: 1.500px solid #111; overflow: hidden; padding-left: 2px; white-space: nowrap; font-size: 7.200px; line-height: 10px; color: #444; }
.q p { margin: 0; }
.q.first { border-left: 1.500px solid #111; }
.q.low p { margin-top: 3px; }
.q.up p { margin-top: -2px; }
.q.mid { display: flex; align-items: center; justify-content: center; text-align: center; padding-left: 0; }
.q.lgreen.mid { justify-content: flex-start; text-align: left; padding-left: 2px; }
.lblue { background: #b4c6e7; }
.lgreen { background: #a9d08e; }
.lcream { background: #ffe699; }
.lpurple { background: #c9a6e4; }
.q.dorange { background: #c55a11; color: #3d1a05; }
.q.red { background: #ff0000; color: #7c0f0f; }
.d { border-right: 1px solid #dcdcdc; border-bottom: 1px solid #dcdcdc; display: flex; align-items: flex-end; justify-content: flex-end; padding-right: 2px; line-height: 9px; overflow: hidden; color: #3a3a3a; }

.vscroll { width: 17px; background: #dfdfdf; position: relative; display: flex; flex-direction: column; padding: 2px 2px 0; gap: 1px; }
.sbtn { height: 12px; background: #fff; border: 1px solid #cfcfcf; display: flex; align-items: center; justify-content: center; flex: none; }
.sbtn.bottom { margin-top: auto; margin-bottom: 1px; }
.sthumb { height: 13px; background: #fff; border: 1px solid #cfcfcf; flex: none; }

/* sheet tabs */
.sheetbar { height: 19px; background: #e6e6e6; display: flex; align-items: flex-start; font-size: 10.500px; flex: none; color: #777; }
.nav { width: 69px; display: flex; gap: 15px; padding: 6px 0 0 19px; }
.sheettab { height: 18px; padding: 0 9px; line-height: 15px; }
.sheettab.on { width: 52px; padding: 0; text-align: center; background: #f3f3f3; color: #217346; font-weight: 700; border-bottom: 2px solid #217346; box-shadow: -1px 0 0 #cfcfcf, 1px 0 0 #cfcfcf; }
.tabsep { width: 1px; height: 13px; margin: 2px 0 0 0; background: #999; }
.addsheet { margin: 2px 0 0 22px; }
.grip { width: 2px; height: 9px; margin: 5px 0 0 556px; border-left: 2px dotted #aaa; }
.hscroll { display: flex; margin: 3px 17px 0 10px; }
.hbtn { width: 12px; height: 13px; background: #fff; border: 1px solid #cfcfcf; display: flex; align-items: center; justify-content: center; flex: none; }
.htrack { width: 461px; height: 13px; background: #dcdcdc; padding-left: 83px; }
.hthumb { display: block; width: 82px; height: 13px; background: #fff; border: 1px solid #cfcfcf; }

/* status */
.status { height: 18px; background: #f3f3f3; display: flex; align-items: center; font-size: 8.500px; letter-spacing: -.15px; color: #666; flex: none; }
.ready { width: 45px; padding-left: 7px; }
.acc { margin-left: 2px; }
.views { display: flex; margin-left: auto; height: 17px; }
.view { width: 33px; display: flex; align-items: center; justify-content: center; }
.zoomer { display: flex; align-items: center; width: 149px; padding-left: 9px; }
.zm { width: 13px; font-size: 13px; color: #555; }
.ztrack { width: 83px; height: 1px; background: #bbb; position: relative; margin-left: -3px; }
.zthumb { position: absolute; left: 24px; top: -4px; width: 4px; height: 9px; background: #666; }
.ztick { position: absolute; left: 41px; top: -2px; width: 1px; height: 5px; background: #999; }
.ztrack + .zm { margin-left: 5px; }
.zpct { margin-left: 0; color: #777; font-size: 9px; }

/* taskbar */
.taskbar { height: 34px; background: #1d1a1c; display: flex; align-items: stretch; flex: none; color: #eee; font-size: 10px; }
.start { width: 40px; background: #3a1d18; display: flex; align-items: center; justify-content: center; }
.tsearch { width: 139px; background: #f3f3f3; color: #333; display: flex; align-items: center; gap: 9px; padding-left: 10px; font-size: 12.500px; overflow: hidden; white-space: nowrap; flex: none; }
.netbox { width: 101px; background: #008000; color: #bfe0bf; font-size: 12px; line-height: 18px; padding: 0 0 0 2px; flex: none; overflow: hidden; margin-top: -1px; }
.netbox > div:first-child { margin-top: -2px; }
.netbox i { color: #5a1010; font-style: normal; font-size: 11px; width: 9px; display: inline-block; }
.apps { display: flex; margin-left: .5px; }
.ti { width: 41.300px; display: flex; align-items: center; justify-content: center; flex: none; position: relative; }
.run::after { content: ""; position: absolute; left: 4px; right: 4px; bottom: 0; height: 2px; background: #76b9ed; }
.sel { background: #4b4b4b; }
.sel.run::after { left: 0; right: 0; }
.svgx { font: 700 9px "Noto Sans", sans-serif; fill: #fff; }
.svgen { font: 700 8px "Noto Sans", sans-serif; fill: #222; }
.tray { margin-left: auto; display: flex; align-items: center; padding-right: 17px; font-family: "DejaVu Sans", sans-serif; }
.temp { margin-left: 7px; width: 32px; font-family: "Noto Sans", sans-serif; font-size: 11.500px; white-space: nowrap; }
.wx { width: 62px; font-size: 11px; white-space: nowrap; text-align: center; }
.traych { margin-left: 21px; }
.trayi { margin-left: 6px; }
.trayi.first { margin-left: 8px; }
.lang { margin-left: 13px; font-size: 11px; }
.clock { width: 48px; margin-left: 14px; text-align: center; font-size: 9.500px; line-height: 15px; white-space: nowrap; }
.notif { position: relative; margin-left: 12px; width: 18px; height: 18px; }
.notif b { position: absolute; right: -3px; bottom: -4px; width: 12px; height: 12px; border: 1px solid #aaa; border-radius: 50%; background: #333; font-size: 8px; font-weight: 400; text-align: center; line-height: 10px; }

/* watermark */
.watermark { position: absolute; left: 550px; top: 628px; width: 180px; height: 80px; display: flex; flex-direction: column; align-items: center; color: rgba(160,160,160,.35); pointer-events: none; }
.wm-ar { font: 700 46px/58px "DejaVu Sans", sans-serif; }
.wm-en { font: 700 21px/18px "DejaVu Sans", sans-serif; margin-top: -1px; letter-spacing: -.2px; color: rgba(170,170,170,.42); }
```
FILE: app.js
```js
var data = [
  "44 555153345 5552315 555 55544555",
  "53 555334254 5555515 555 55555553",
  "24 355151544 5223524 453 43335542",
  "23 555151535 5445551 435 55555555",
  "33 135422442 5352533 555 55555451",
  "32 433424224 2111224 223 32213435",
  "22 113425134 4554315 444 44455534",
  "22 132515112 5554333 555 52544521",
  "32 244333324 4553424 434 44444334",
  "44 255241554 5453533 443 53555555",
  "51 111242455 1553515 112 11155534",
  "32 434424255 4555515 455 55555445",
  "54 334423344 4553524 444 55555554",
  "34 555241535 5353433 553 33555353",
  "23 244425155 4453442 334 44554435",
  "53 333515133 3554515 333 33345553",
  "42 555244245 5554424 454 44455545",
  "44 522334243 4553515 555 55555552",
  "55 555335155 5553524 555 55555555",
  "34 344455445 4553533 444 45555554"
];

function cell(cls, text) {
  var el = document.createElement("div");
  if (cls) el.className = cls;
  if (text) el.textContent = text;
  return el;
}

var grid = document.getElementById("grid");
data.forEach(function (row, i) {
  var n = i + 4;
  var head = cell(n === 8 ? "rh sel" : "rh");
  head.appendChild(cell("", String(n)));
  grid.appendChild(head);
  grid.appendChild(cell());
  row.split(" ").forEach(function (group) {
    group.split("").forEach(function (v) { grid.appendChild(cell("d", v)); });
    grid.appendChild(cell());
  });
});
```
